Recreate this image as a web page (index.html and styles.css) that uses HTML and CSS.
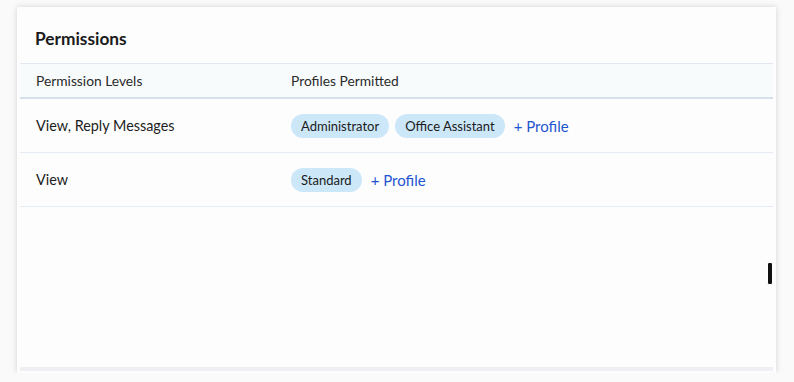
FILE: index.html
```html
<!DOCTYPE html>
<html lang="en">
<head>
  <meta charset="UTF-8">
  <title>Permissions</title>
  <link rel="stylesheet" href="styles.css">
</head>
<body>
<div class="card">
  <h2 class="card-title">Permissions</h2>
  <div class="perm-table">
    <div class="perm-row perm-head">
      <div class="col-level">Permission Levels</div>
      <div class="col-profiles">Profiles Permitted</div>
    </div>
    <div class="perm-row">
      <div class="col-level">View, Reply Messages</div>
      <div class="col-profiles">
        <span class="chip">Administrator</span>
        <span class="chip">Office Assistant</span>
        <a href="#" class="add-profile">+ Profile</a>
      </div>
    </div>
    <div class="perm-row">
      <div class="col-level">View</div>
      <div class="col-profiles">
        <span class="chip">Standard</span>
        <a href="#" class="add-profile">+ Profile</a>
      </div>
    </div>
  </div>
  <div class="h-track"></div>
  <div class="v-thumb"></div>
</div>
</body>
</html>
```

FILE: styles.css
```css
html, body {
  background-color: #fafafa;
  color: #222;
  font-family: 'Lato', 'Liberation Sans', sans-serif;
  margin: 0;
  padding: 0;
}
.card {
  position: relative;
  display: flex;
  flex-direction: column;
  box-sizing: border-box;
  width: 759px;
  height: 366px;
  margin: 7px 0 0 17px;
  padding: 0 3px;
  background: #fdfdfd;
  box-shadow: 0 0 6px rgba(0,0,0,0.16);
}
.card-title {
  margin: 0;
  padding: 20px 15px 13px 15px;
  font-size: 17.3px;
  line-height: 23px;
  font-weight: bold;
  color: #1a1a1a;
}
.perm-table {
  flex: 1;
}
.perm-row {
  display: flex;
  align-items: center;
  height: 53px;
  border-bottom: 1px solid #e4ebf5;
  font-size: 14.4px;
  color: #1e1e1e;
}
.perm-head {
  height: 33px;
  background: #f8fbfc;
  border-top: 1px solid #e2e8f1;
  border-bottom: 2px solid #d6dfeb;
  font-size: 13.8px;
  color: #2a2a2a;
}
.col-level {
  width: 255px;
  padding-left: 16px;
  padding-bottom: 1px;
}
.col-profiles {
  display: flex;
  align-items: center;
  gap: 6px;
}
.chip {
  display: inline-block;
  height: 24px;
  line-height: 24px;
  padding: 0 10px;
  border-radius: 12px;
  background: #cce7f8;
  font-size: 13px;
  color: #1a1a1a;
}
.add-profile {
  margin-left: 3px;
  color: #1f55d0;
  text-decoration: none;
  font-size: 15px;
}
.h-track {
  height: 4px;
  margin-bottom: 2px;
  background: #eef0f4;
}
.v-thumb {
  position: absolute;
  right: 3px;
  top: 255px;
  width: 4px;
  height: 21px;
  background: #111;
  border: 1px solid #fff;
  border-radius: 2px;
}
```
